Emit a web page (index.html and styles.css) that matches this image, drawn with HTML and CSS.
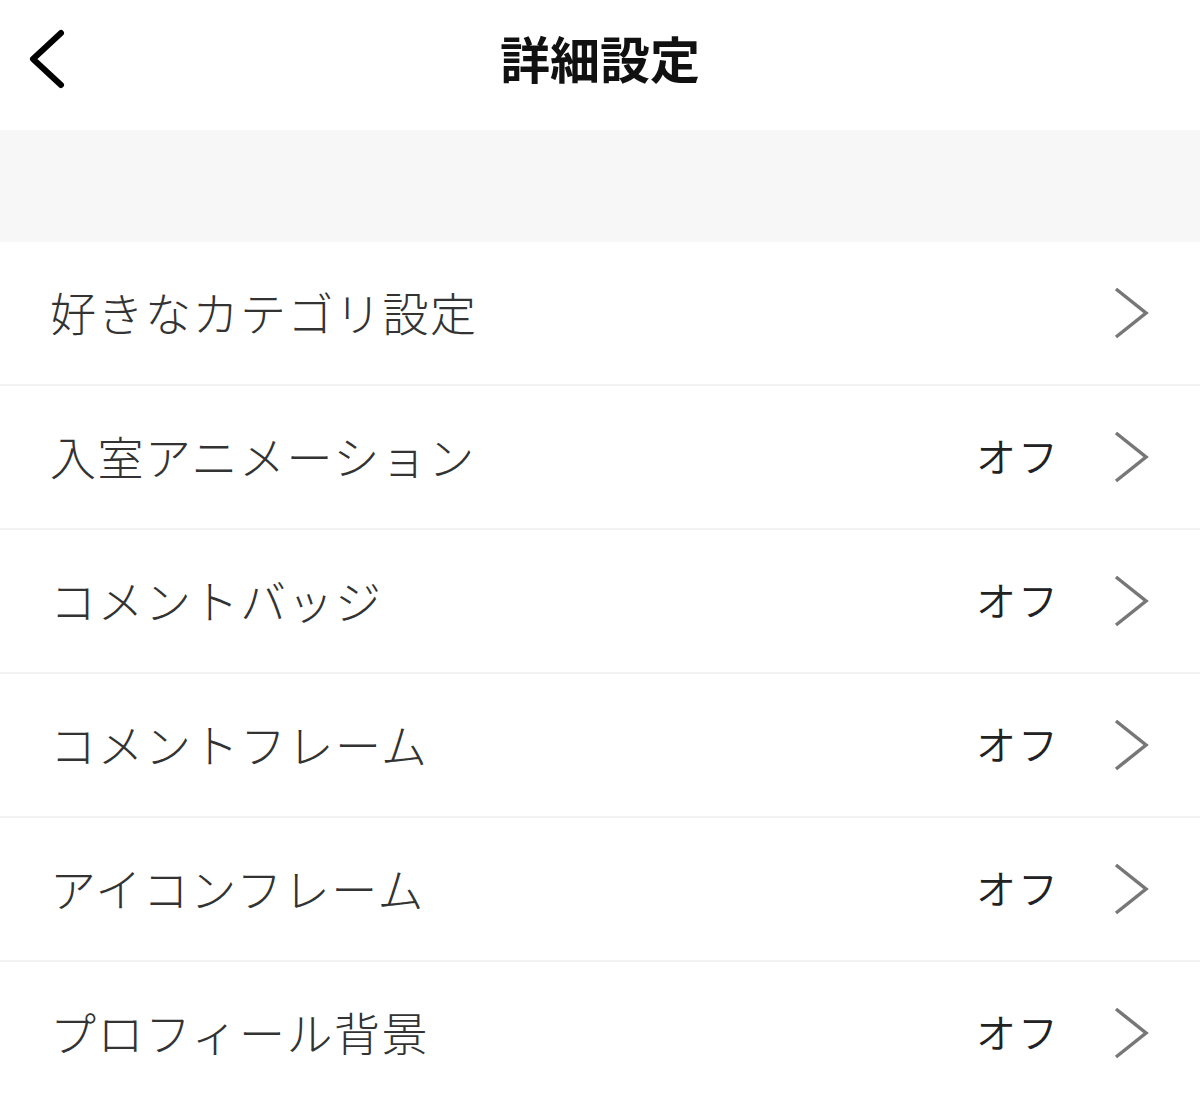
FILE: index.html
```html
<!DOCTYPE html>
<html lang="ja">

<head>
    <meta charset="UTF-8">
    <meta name="viewport" content="width=device-width, initial-scale=1.0">
    <title>詳細設定</title>
    <link rel="stylesheet" href="styles.css">
</head>

<body>
    <header class="topbar">
        <button class="back-btn" aria-label="戻る">
            <svg width="40" height="64" viewBox="0 0 40 64">
                <path d="M34 5 L6 31 L34 57" fill="none" stroke="#000" stroke-width="6" stroke-linecap="round" stroke-linejoin="round"/>
            </svg>
        </button>
        <h1 class="title">詳細設定</h1>
    </header>

    <div class="spacer"></div>

    <ul class="menu">
        <li class="menu-item">
            <span class="label">好きなカテゴリ設定</span>
            <span class="chevron"><svg width="40" height="56" viewBox="0 0 40 56"><path d="M4 4 L34 28 L4 52" fill="none" stroke="#777" stroke-width="3.5"/></svg></span>
        </li>
        <li class="menu-item">
            <span class="label">入室アニメーション</span>
            <span class="value">オフ</span>
            <span class="chevron"><svg width="40" height="56" viewBox="0 0 40 56"><path d="M4 4 L34 28 L4 52" fill="none" stroke="#777" stroke-width="3.5"/></svg></span>
        </li>
        <li class="menu-item">
            <span class="label">コメントバッジ</span>
            <span class="value">オフ</span>
            <span class="chevron"><svg width="40" height="56" viewBox="0 0 40 56"><path d="M4 4 L34 28 L4 52" fill="none" stroke="#777" stroke-width="3.5"/></svg></span>
        </li>
        <li class="menu-item">
            <span class="label">コメントフレーム</span>
            <span class="value">オフ</span>
            <span class="chevron"><svg width="40" height="56" viewBox="0 0 40 56"><path d="M4 4 L34 28 L4 52" fill="none" stroke="#777" stroke-width="3.5"/></svg></span>
        </li>
        <li class="menu-item">
            <span class="label">アイコンフレーム</span>
            <span class="value">オフ</span>
            <span class="chevron"><svg width="40" height="56" viewBox="0 0 40 56"><path d="M4 4 L34 28 L4 52" fill="none" stroke="#777" stroke-width="3.5"/></svg></span>
        </li>
        <li class="menu-item">
            <span class="label">プロフィール背景</span>
            <span class="value">オフ</span>
            <span class="chevron"><svg width="40" height="56" viewBox="0 0 40 56"><path d="M4 4 L34 28 L4 52" fill="none" stroke="#777" stroke-width="3.5"/></svg></span>
        </li>
    </ul>
</body>

</html>
```

FILE: styles.css
```css
* {
    margin: 0;
    padding: 0;
    box-sizing: border-box;
}

body,
html {
    height: 100%;
    background: #fff;
    font-family: "Noto Sans CJK JP", "Noto Sans", sans-serif;
    overflow: hidden;
}

.topbar {
    position: relative;
    height: 130px;
    display: flex;
    align-items: center;
    justify-content: center;
}

.back-btn {
    position: absolute;
    left: 27px;
    top: 28px;
    background: none;
    border: none;
    cursor: pointer;
}

.back-btn svg {
    display: block;
}

.title {
    font-size: 50px;
    font-weight: 700;
    color: #111;
    margin-top: -16px;
}

.spacer {
    height: 112px;
    background: #f7f7f7;
}

.menu {
    list-style: none;
}

.menu-item {
    height: 144px;
    display: flex;
    align-items: center;
    padding: 0 48px 0 50px;
    border-bottom: 2px solid #f2f2f2;
}

.label {
    flex: 1;
    font-size: 46px;
    font-weight: 300;
    color: #333;
    letter-spacing: 1.5px;
    margin-top: -4px;
}

.value {
    font-size: 40px;
    font-weight: 350;
    color: #222;
    margin-right: 52px;
    letter-spacing: 2px;
    margin-top: -4px;
}

.chevron svg {
    display: block;
}
```
